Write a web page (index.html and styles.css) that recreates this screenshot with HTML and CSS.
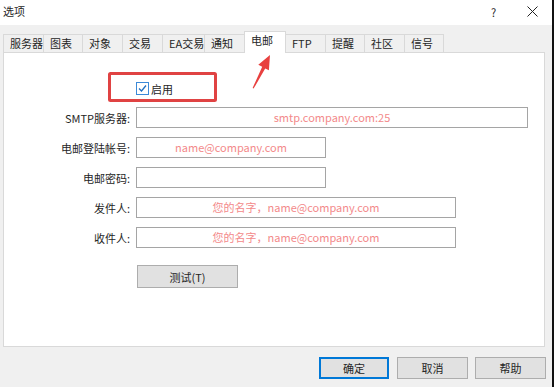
FILE: index.html
```html
<!DOCTYPE html>
<html lang="zh">
<head>
<meta charset="utf-8">
<title>选项</title>
<link rel="stylesheet" href="styles.css">
</head>
<body>
<div class="window">
  <div class="titlebar">
    <span class="title">选项</span>
    <span class="help">?</span>
    <span class="close">
      <svg width="11" height="11" viewBox="0 0 11 11"><path d="M0.5 0.5L10.5 10.5M10.5 0.5L0.5 10.5" stroke="#222" stroke-width="1" fill="none"/></svg>
    </span>
  </div>
  <div class="body">
    <div class="tabs">
      <div class="tab w40">服务器</div>
      <div class="tab w39">图表</div>
      <div class="tab w40">对象</div>
      <div class="tab w40">交易</div>
      <div class="tab w42">EA交易</div>
      <div class="tab w40">通知</div>
      <div class="tab active w41">电邮</div>
      <div class="tab w40">FTP</div>
      <div class="tab w39">提醒</div>
      <div class="tab w40">社区</div>
      <div class="tab w39">信号</div>
    </div>
    <div class="panel">
      <div class="form">
        <div class="label"></div>
        <div class="check-row">
          <span class="checkbox">
            <svg width="13" height="13" viewBox="0 0 13 13"><rect x="0.5" y="0.5" width="12" height="12" fill="#fff" stroke="#3c8ad8"/><path d="M3 6.5L5.5 9L10 3.5" stroke="#1f6fc0" stroke-width="1.3" fill="none"/></svg>
          </span>
          <span class="check-label">启用</span>
        </div>

        <div class="label">SMTP服务器:</div>
        <div class="input wide">smtp.company.com:25</div>

        <div class="label">电邮登陆帐号:</div>
        <div class="input short">name@company.com</div>

        <div class="label">电邮密码:</div>
        <div class="input short"></div>

        <div class="label">发件人:</div>
        <div class="input mid">您的名字，name@company.com</div>

        <div class="label">收件人:</div>
        <div class="input mid">您的名字，name@company.com</div>

        <div class="label"></div>
        <div class="test-row"><button class="btn test">测试(T)</button></div>
      </div>
    </div>
    <div class="footer">
      <button class="btn dlg default">确定</button>
      <button class="btn dlg">取消</button>
      <button class="btn dlg">帮助</button>
    </div>
  </div>
</div>
<svg class="annot" width="554" height="387" viewBox="0 0 554 387">
  <rect x="109.5" y="73.5" width="106" height="27" fill="none" stroke="#e04343" stroke-width="3" rx="1"/>
  <polygon points="270,55 268.9,70.3 265.2,68.5 253.6,88.6 252.6,88 262.2,66.8 258.3,64.7" fill="#e8403f"/>
</svg>
</body>
</html>
```

FILE: styles.css
```css
* { box-sizing: border-box; }
html, body {
  margin: 0;
  padding: 0;
}
body {
  width: 554px;
  height: 387px;
  overflow: hidden;
  position: relative;
  font-family: "Noto Sans CJK SC", sans-serif;
  font-size: 11px;
  color: #262626;
  background: #f0f0f0;
}
.window {
  width: 554px;
  height: 387px;
  display: flex;
  flex-direction: column;
  border-right: 2px solid #111;
}
.titlebar {
  height: 25px;
  background: #fff;
  display: flex;
  align-items: center;
  padding-left: 3px;
}
.title { flex: 1; line-height: 1; margin-top: -2px; font-size: 11px; }
.help { width: 10px; margin-right: 26px; line-height: 1; font-size: 11px; margin-top: -1px; }
.close { width: 11px; height: 11px; margin-right: 14px; display: flex; margin-top: -2px; }
.body {
  flex: 1;
  background: #f0f0f0;
  display: flex;
  flex-direction: column;
  padding-left: 3px;
}
.tabs {
  display: flex;
  align-items: flex-end;
  margin-top: 6px;
  height: 21px;
  position: relative;
  z-index: 1;
}
.tab {
  height: 18px;
  border: 1px solid #d9d9d9;
  border-bottom: none;
  margin-left: -1px;
  padding-left: 6px;
  line-height: 17px;
  background: #f0f0f0;
  white-space: nowrap;
}
.tab:first-child { margin-left: 0; }
.tab.active {
  height: 22px;
  margin-bottom: -1px;
  background: #fff;
  line-height: 16px;
  padding-top: 0;
}
.w39 { width: 40px; }
.w40 { width: 41px; }
.w41 { width: 42px; }
.w42 { width: 43px; }
.panel {
  width: 542px;
  height: 295px;
  background: #fff;
  border: 1px solid #d9d9d9;
}
.form {
  display: grid;
  grid-template-columns: 126px auto;
  column-gap: 6px;
  row-gap: 9px;
  padding-top: 26px;
  align-items: center;
}
.label {
  text-align: right;
  white-space: nowrap;
}
.check-row {
  height: 19px;
  display: flex;
  align-items: center;
}
.checkbox { width: 13px; height: 13px; display: flex; margin-left: 0; }
.check-label { margin-left: 2px; }
.input {
  height: 21px;
  border: 1px solid #a5a5a5;
  background: #fff;
  color: #f3898a;
  text-align: center;
  line-height: 19px;
  white-space: nowrap;
}
.wide { width: 392px; }
.short { width: 190px; }
.mid { width: 320px; }
.test-row { margin-top: 8px; }
.btn {
  font-family: inherit;
  font-size: 11px;
  color: #262626;
  background: #e1e1e1;
  border: 1px solid #adadad;
  padding: 0;
  margin: 0;
}
.test { width: 101px; height: 23px; margin-left: 1px; }
.footer {
  display: flex;
  justify-content: flex-end;
  gap: 7px;
  padding-right: 6px;
  margin-top: 10px;
}
.dlg { width: 71px; height: 22px; }
.dlg.default { border: 2px solid #0078d7; width: 70px; margin-right: 1px; }
.annot {
  position: absolute;
  left: 0;
  top: 0;
  pointer-events: none;
}
```
